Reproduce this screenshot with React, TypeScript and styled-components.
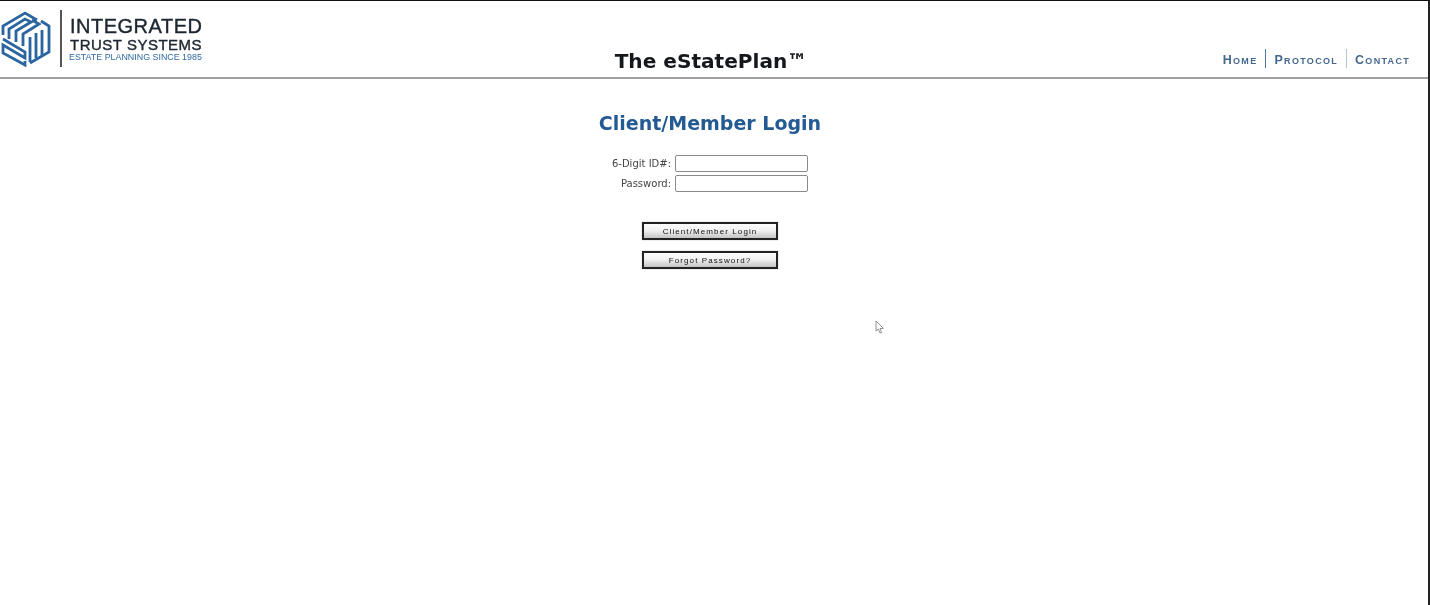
import React from "react";
import styled, { createGlobalStyle } from "styled-components";

const GlobalStyle = createGlobalStyle`
  html, body {
    margin: 0;
    padding: 0;
    background: #fff;
  }
  body {
    font-family: "DejaVu Sans", Verdana, sans-serif;
  }
`;

const Page = styled.div`
  position: relative;
  box-sizing: border-box;
  width: 1430px;
  height: 605px;
  overflow: hidden;
  border-top: 1px solid #111;
  border-right: 2px solid #222;
  background: #fff;
  filter: blur(0.35px);
`;

const Header = styled.header`
  box-sizing: border-box;
  height: 78px;
  display: grid;
  grid-template-columns: 1fr auto 1fr;
  padding-right: 8px;
  border-bottom: 2px solid #a2a2a2;
`;

const Brand = styled.div`
  display: flex;
  align-items: flex-start;
  padding: 9px 0 0 1px;
`;

const BrandRule = styled.div`
  width: 2px;
  height: 57px;
  margin: 0 8px 0 9px;
  background: #555;
`;

const BrandText = styled.div`
  display: flex;
  flex-direction: column;
  padding-top: 6px;
  font-family: "Liberation Sans", Arial, sans-serif;
  color: #1d2730;
`;

const BrandName = styled.div<{ $size: number }>`
  font-size: ${(p) => p.$size}px;
  line-height: ${(p) => p.$size + 0.5}px;
  letter-spacing: 0.5px;
  -webkit-text-stroke: 0.4px #1d2730;
`;

const BrandTag = styled.div`
  margin-left: -1px;
  font-size: 8.9px;
  line-height: 10px;
  color: #2f6aa3;
`;

const Title = styled.h1`
  margin: 0 0 0 2px;
  align-self: end;
  padding-bottom: 3px;
  font-size: 20.1px;
  line-height: 26px;
  font-weight: 700;
  color: #14181c;
  white-space: nowrap;
`;

const Nav = styled.nav`
  display: flex;
  justify-content: flex-end;
  align-items: flex-end;
  padding: 0 10px 9px 0;
`;

const NavLink = styled.a<{ $rule?: string }>`
  box-sizing: border-box;
  height: 19px;
  display: flex;
  align-items: center;
  padding: 2px 8px 0 ${(p) => (p.$rule ? 8 : 0)}px;
  border-left: ${(p) => (p.$rule ? `1px solid ${p.$rule}` : "none")};
  font-family: "Liberation Sans", Arial, sans-serif;
  font-size: 12.5px;
  font-weight: 700;
  font-variant: small-caps;
  letter-spacing: 1.3px;
  color: #44688f;
  &:last-child {
    padding-right: 0;
  }
`;

const Main = styled.main`
  display: flex;
  flex-direction: column;
  align-items: center;
  padding: 30px 8px 0 0;
`;

const Heading = styled.h2`
  margin: 0 0 18px;
  font-size: 19px;
  line-height: 28px;
  font-weight: 700;
  color: #245a94;
`;

const FormGrid = styled.form`
  display: grid;
  grid-template-columns: auto 133px;
  column-gap: 4px;
  row-gap: 3px;
  align-items: center;
`;

const Label = styled.label`
  font-size: 10px;
  line-height: 17px;
  color: #444;
  text-align: right;
`;

const Field = styled.input`
  box-sizing: border-box;
  width: 133px;
  height: 17px;
  padding: 0 2px;
  border: 1px solid #8a8a8a;
  border-radius: 2px;
  background: #fff;
`;

const Actions = styled.div`
  display: flex;
  flex-direction: column;
  gap: 11px;
  margin-top: 30px;
`;

const ActionButton = styled.button`
  box-sizing: border-box;
  width: 136px;
  height: 18px;
  padding: 0;
  border: 2px solid #222;
  border-radius: 0;
  background: linear-gradient(#fdfdfd, #f2f2f2 45%, #c4c4c4);
  box-shadow: 0 0 1px #999;
  font-family: "Liberation Sans", Arial, sans-serif;
  font-size: 8px;
  letter-spacing: 1.1px;
  color: #111;
`;

const Pointer = styled.svg`
  position: absolute;
  left: 875px;
  top: 319px;
`;

const Logo = () => (
  <svg width="50" height="57" viewBox="0 0 50 57" fill="none" stroke="#2a659f" strokeWidth="2.8">
    {/* top face */}
    <path d="M2 25 L2 16 L24 3 L36 10" />
    <path d="M8 29 L8 19 L24 9 L30 12 L15 21 L15 32" />
    <path d="M22 36 L22 24 L38 14 L31 10" />
    {/* left face */}
    <path d="M2 29 L24 42 L24 48 L2 35 L2 43 L24 55 L24 51" />
    {/* right face */}
    <path d="M29 52 L29 27" />
    <path d="M35 48 L35 23" />
    <path d="M41 45 L41 20" />
    <path d="M29 53 L48 42 L48 16 L40 11" />
  </svg>
);

export default function App() {
  return (
    <>
      <GlobalStyle />
      <Page>
        <Header>
          <Brand>
            <Logo />
            <BrandRule />
            <BrandText>
              <BrandName $size={20}>INTEGRATED</BrandName>
              <BrandName $size={15}>TRUST SYSTEMS</BrandName>
              <BrandTag>ESTATE PLANNING SINCE 1985</BrandTag>
            </BrandText>
          </Brand>
          <Title>The eStatePlan™</Title>
          <Nav>
            <NavLink>Home</NavLink>
            <NavLink $rule="#4f78a3">Protocol</NavLink>
            <NavLink $rule="#b4c4d4">Contact</NavLink>
          </Nav>
        </Header>
        <Main>
          <Heading>Client/Member Login</Heading>
          <FormGrid>
            <Label>6-Digit ID#:</Label>
            <Field />
            <Label>Password:</Label>
            <Field type="password" />
          </FormGrid>
          <Actions>
            <ActionButton type="button">Client/Member Login</ActionButton>
            <ActionButton type="button">Forgot Password?</ActionButton>
          </Actions>
        </Main>
        <Pointer width="10" height="14" viewBox="0 0 10 14">
          <path d="M1 1 L1 11 L3.4 9 L5 13 L6.5 12.4 L5 8.6 L8.4 8.4 Z" fill="#fff" stroke="#777" strokeWidth="0.8" />
        </Pointer>
      </Page>
    </>
  );
}
